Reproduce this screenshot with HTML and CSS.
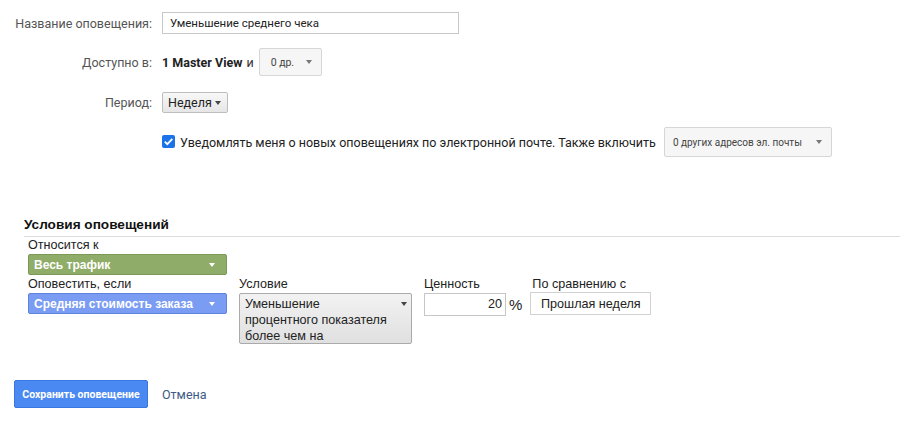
FILE: index.html
```html
<!DOCTYPE html>
<html lang="ru">
<head>
<meta charset="utf-8">
<link rel="stylesheet" href="styles.css">
</head>
<body>
<div class="page">
  <div class="form">
    <div class="row r1">
      <div class="label">Название оповещения:</div>
      <div class="field"><div class="text-input">Уменьшение среднего чека</div></div>
    </div>
    <div class="row r2">
      <div class="label">Доступно в:</div>
      <div class="field">
        <span class="strong">1 Master View</span><span class="and">и</span>
        <div class="btn-menu small">0 др.<span class="caret"></span></div>
      </div>
    </div>
    <div class="row r3">
      <div class="label">Период:</div>
      <div class="field"><div class="select-sm">Неделя<span class="caret dark"></span></div></div>
    </div>
    <div class="row r4">
      <div class="label"></div>
      <div class="field">
        <span class="checkbox"><svg width="13" height="13" viewBox="0 0 13 13"><rect x="0" y="0" width="13" height="13" rx="2" fill="#1a73e8"/><path d="M2.8 6.6 L5.3 9.1 L10.3 3.8" stroke="#fff" stroke-width="1.8" fill="none"/></svg></span>
        <span class="notify">Уведомлять меня о новых оповещениях по электронной почте. Также включить</span>
        <div class="btn-menu emails">0 других адресов эл. почты<span class="caret"></span></div>
      </div>
    </div>
  </div>

  <div class="conditions">
    <h2 class="cond-title">Условия оповещений</h2>
    <div class="cond-body">
      <div class="cap">Относится к</div>
      <div class="pill green">Весь трафик<span class="caret white"></span></div>
      <div class="cond-grid">
        <div class="col c1">
          <div class="cap">Оповестить, если</div>
          <div class="pill blue">Средняя стоимость заказа<span class="caret white"></span></div>
        </div>
        <div class="col c2">
          <div class="cap">Условие</div>
          <div class="cond-select">Уменьшение<br>процентного показателя<br>более чем на<span class="caret dark"></span></div>
        </div>
        <div class="col c3">
          <div class="cap">Ценность</div>
          <div class="val-wrap"><div class="val-input">20</div><span class="pct">%</span></div>
        </div>
        <div class="col c4">
          <div class="cap">По сравнению с</div>
          <div class="cmp-box">Прошлая неделя</div>
        </div>
      </div>
    </div>
  </div>

  <div class="actions">
    <button class="save">Сохранить оповещение</button>
    <a class="cancel">Отмена</a>
  </div>
</div>
</body>
</html>
```

FILE: styles.css
```css
* { box-sizing: border-box; }
html, body { margin: 0; padding: 0; background: #fff; }
body { width: 900px; height: 422px; overflow: hidden; font-family: Roboto, "Liberation Sans", sans-serif; color: #222; }
.page { padding-top: 12px; }

.form { display: flex; flex-direction: column; }
.row { display: flex; align-items: center; }
.r2 { margin-top: 14px; }
.r3 { margin-top: 16px; }
.r4 { margin-top: 14px; }
.label { width: 152px; text-align: right; font-size: 12.5px; color: #555; flex: none; }
.field { margin-left: 10px; display: flex; align-items: center; }

.text-input { width: 297px; height: 22px; border: 1px solid #c8c8c8; font-size: 11.5px; color: #222; padding: 3px 7px; line-height: 15px; }
.strong { font-weight: 700; font-size: 12.5px; color: #222; }
.and { font-size: 12.5px; color: #333; margin-left: 4px; }
.btn-menu { display: flex; align-items: center; border: 1px solid #d6d6d6; border-radius: 2px; background: #f6f6f6; color: #444; font-size: 10.5px; }
.btn-menu.small { margin-left: 5px; height: 28px; width: 63px; padding-left: 11px; }
.btn-menu.small .caret { margin-left: 12px; }
.emails { height: 30px; width: 168px; margin-left: 8px; padding-left: 8px; font-size: 10px; }
.emails .caret { margin-left: auto; margin-right: 9px; }

.caret { display: inline-block; width: 0; height: 0; border-left: 3.5px solid transparent; border-right: 3.5px solid transparent; border-top: 4px solid #777; }
.caret.dark { border-top-color: #444; }
.caret.white { border-top-color: #fff; }

.select-sm { display: flex; align-items: center; height: 21px; width: 66px; border: 1px solid #bdbdbd; border-radius: 2px; background: linear-gradient(#f8f8f8, #e6e6e6); font-size: 12.5px; color: #222; padding-left: 5px; }
.select-sm .caret { margin-left: 3px; }

.checkbox { display: inline-flex; width: 13px; height: 13px; margin-top: -1px; }
.notify { font-size: 12.5px; color: #222; margin-left: 5px; }

.conditions { margin-top: 59px; font-family: "Liberation Sans", Arial, sans-serif; }
.cond-title { margin: 0 0 0 24px; font-size: 13.6px; font-weight: 700; color: #111; line-height: 18px; padding-bottom: 2px; border-bottom: 1px solid #dcdcdc; }
.cond-body { padding-left: 28px; }
.cap { font-size: 12.6px; color: #222; line-height: 17px; }
.cond-grid .cap { margin-top: 1px; }
.pill { display: flex; align-items: center; justify-content: space-between; width: 199px; height: 21px; border-radius: 2px; color: #fff; font-weight: 700; font-size: 12px; padding: 0 11px 0 5px; }
.pill.green { background: #8fac69; border: 1px solid #7b9956; }
.pill.blue { background: #7a9cf3; border: 1px solid #5f83dc; }
.cond-grid { display: flex; align-items: flex-start; }
.col { display: flex; flex-direction: column; }
.c2 { margin-left: 12px; }
.c3 { margin-left: 12px; }
.c4 { margin-left: 10px; }
.c4 .cmp-box { margin-left: -2px; }
.cond-select { position: relative; width: 173px; height: 51px; border: 1px solid #aaa; border-radius: 2px; background: linear-gradient(#f2f2f2, #e0e0e0); font-size: 12.6px; line-height: 16px; padding: 2px 14px 0 5px; color: #222; white-space: nowrap; }
.cond-select .caret { position: absolute; right: 4px; top: 8px; }
.val-wrap { display: flex; align-items: center; }
.val-input { width: 82px; height: 23px; border: 1px solid #c6c6c6; text-align: right; font-size: 12.6px; padding: 3px 3px 0 0; color: #222; }
.pct { font-size: 15px; margin-left: 3px; color: #222; }
.cmp-box { width: 121px; height: 23px; border: 1px solid #d2d2d2; font-size: 12.6px; text-align: center; padding-top: 4px; color: #222; margin-top: -1px; }

.actions { display: flex; align-items: center; margin-top: 36px; padding-left: 14px; }
.save { width: 134px; height: 28px; border: 1px solid #3a76e0; border-radius: 2px; background: #4a88f2; color: #fff; font-family: Roboto, sans-serif; font-weight: 700; font-size: 10.5px; padding: 0; }
.cancel { margin-left: 14px; font-size: 12.5px; color: #3d5a86; font-family: Roboto, sans-serif; }
```
